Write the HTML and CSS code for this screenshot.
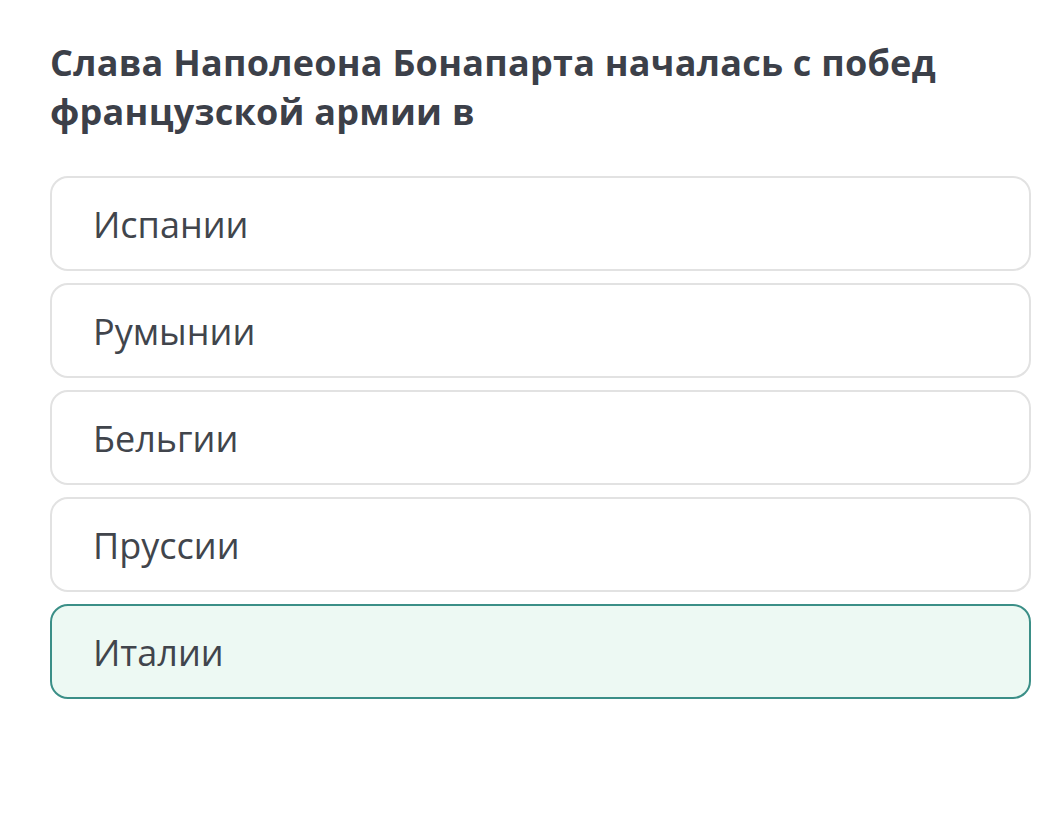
FILE: index.html
```html
<!DOCTYPE html>
<html lang="ru">
<head>
  <meta charset="UTF-8" />
  <meta name="viewport" content="width=device-width, initial-scale=1.0" />
  <title>Вопрос</title>
  <link rel="stylesheet" href="styles.css">
</head>
<body>

<section class="question">
  <h2>Слава Наполеона Бонапарта началась с побед французской армии в</h2>

  <div class="answers">
    <div class="answer">Испании</div>
    <div class="answer">Румынии</div>
    <div class="answer">Бельгии</div>
    <div class="answer">Пруссии</div>
    <div class="answer selected">Италии</div>
  </div>
</section>

</body>
</html>
```

FILE: styles.css
```css
:root {
  --text: #3c4049;
  --border: #e2e2e2;
  --selected-border: #3b8f87;
  --selected-bg: #edf9f3;
}

* {
  margin: 0;
  padding: 0;
  box-sizing: border-box;
  font-family: 'Open Sans', sans-serif;
}

body {
  background: #ffffff;
  color: var(--text);
}

.question {
  padding: 38px 24px 0 50px;
}

.question h2 {
  font-size: 36px;
  font-weight: 700;
  line-height: 49px;
  letter-spacing: 0.25px;
  max-width: 960px;
  margin-bottom: 40px;
}

.answers {
  display: flex;
  flex-direction: column;
  gap: 12px;
}

.answer {
  height: 95px;
  display: flex;
  align-items: center;
  padding-left: 41px;
  padding-top: 2px;
  border: 2px solid var(--border);
  border-radius: 18px;
  font-size: 36px;
  color: #41454c;
}

.answer.selected {
  border-color: var(--selected-border);
  background: var(--selected-bg);
}
```
